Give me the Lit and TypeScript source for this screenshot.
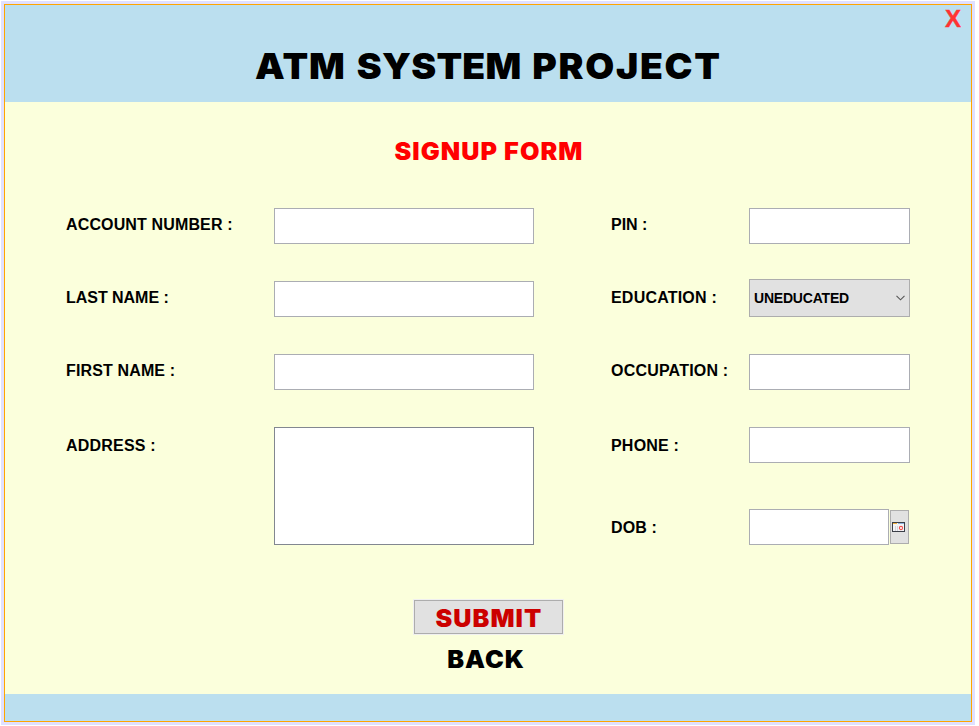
import { LitElement, html, css } from "lit";
import { customElement, state } from "lit/decorators.js";

@customElement("app-root")
export class AppRoot extends LitElement {
  static styles = css`
    :host { display: block; width: 979px; height: 726px; background: #fff; overflow: hidden; font-family: "Liberation Sans", Arial, sans-serif; font-weight: 700; color: #000; }
    * { box-sizing: border-box; }
    .pad { padding: 1px 4px 1px 1px; height: 726px; }
    .frame { height: 724px; padding: 3px; background: #e0e0ff; }
    .window { display: flex; flex-direction: column; width: 968px; height: 718px; border: 1px solid #ffa500; background: #fbffdc; position: relative; }
    .header { height: 97px; background: #bbdfef; display: flex; justify-content: center; flex: none; }
    .close { position: absolute; right: 10px; top: 0; border: 0; padding: 0; background: none; font: 700 24px/28px "Liberation Sans", Arial, sans-serif; color: #ff3333; -webkit-text-stroke: 0.4px #ff3333; }
    .heavy { font-family: "Arial Black", Inter, sans-serif; font-weight: 900; white-space: nowrap; margin: 0; }
    .wide { display: inline-block; transform: scaleX(1.05); letter-spacing: 1px; margin-right: -1px; }
    .title { font-size: 36px; line-height: 44px; margin-top: 39px; }
    .title .wide { transform: scaleX(1.04); letter-spacing: 1px; word-spacing: 2.3px; }
    .title .tight { letter-spacing: 0.2px; }
    .title .loose { letter-spacing: 1.6px; }
    .main { flex: 1; display: flex; flex-direction: column; align-items: center; }
    .sub { font-size: 24px; line-height: 30px; margin-top: 35px; color: #f00; }
    .form { display: grid; align-self: flex-start; margin: 41px 0 0 61px; grid-template-columns: 208px 260px 77px 138px 161px; grid-template-rows: 73px 73px 73px 82px 36px; align-items: start; }
    .label { font-size: 16px; line-height: 33px; letter-spacing: 0.14px; white-space: nowrap; }
    .snug { letter-spacing: -0.03px; }
    .airy { letter-spacing: 0.2px; }
    .low { line-height: 37px; }
    .c1 { grid-column: 1; } .c2 { grid-column: 2; } .c4 { grid-column: 4; } .c5 { grid-column: 5; }
    .r1 { grid-row: 1; } .r2 { grid-row: 2; } .r3 { grid-row: 3; } .r4 { grid-row: 4; } .r5 { grid-row: 5; }
    .field { display: block; width: 100%; height: 36px; border: 1px solid #abadb3; background: #fff; border-radius: 0; padding: 2px 5px; outline: none; resize: none; font: inherit; }
    .area { height: 118px; grid-row: 4 / 6; border-color: #828790; }
    .select { height: 38px; margin-top: -2px; border: 1px solid #adadad; background: #e1e1e1; display: flex; align-items: center; justify-content: space-between; padding: 0 4px; font-size: 14px; letter-spacing: -0.2px; }
    .date { display: flex; }
    .date .field { width: 140px; }
    .cal { width: 19px; height: 34px; margin: 1px 0 0 1px; border: 1px solid #adadad; background: #e1e1e1; padding: 0 0 0 1px; display: flex; align-items: center; justify-content: flex-start; }
    .submit { width: 149px; height: 34px; margin: 55px 0 0 0; border: 1px solid #adadad; background: #e1e1e1; color: #cc0000; font-size: 24px; line-height: 28px; padding: 4px 0 0; outline: 1px solid #f0f0f0; }
    .back { font-size: 24px; line-height: 30px; margin: 11px 4px 0 0; }
    .footer { height: 27px; background: #bbdfef; flex: none; }
    svg { display: block; flex: none; }
  `;

  @state() private education = "UNEDUCATED";

  private label(text: string, cls: string) {
    return html`<div class="label ${cls}">${text} :</div>`;
  }

  private field(cls: string, name: string) {
    return html`<input class="field ${cls}" aria-label=${name} />`;
  }

  render() {
    return html`<div class="pad"><div class="frame"><div class="window">
      <header class="header"><h1 class="heavy title"><span class="wide">ATM <span class="tight">SYSTEM</span> <span class="loose">PROJECT</span></span></h1></header>
      <button class="close">X</button>
      <main class="main">
        <h2 class="heavy sub"><span class="wide">SIGNUP FORM</span></h2>
        <div class="form">
          ${this.label("ACCOUNT NUMBER", "c1 r1")}${this.field("c2 r1", "Account number")}
          ${this.label("PIN", "c4 r1 snug")}${this.field("c5 r1", "Pin")}
          ${this.label("LAST NAME", "c1 r2 snug")}${this.field("c2 r2", "Last name")}
          ${this.label("EDUCATION", "c4 r2 airy")}
          <div class="select c5 r2" role="combobox"><span>${this.education}</span>
            <svg width="9" height="6" viewBox="0 0 9 6"><path d="M.5 .8 4.5 4.8 8.5 .8" fill="none" stroke="#555" stroke-width="1.1"/></svg>
          </div>
          ${this.label("FIRST NAME", "c1 r3")}${this.field("c2 r3", "First name")}
          ${this.label("OCCUPATION", "c4 r3 airy")}${this.field("c5 r3", "Occupation")}
          ${this.label("ADDRESS", "c1 r4 low airy")}<textarea class="field area c2" aria-label="Address"></textarea>
          ${this.label("PHONE", "c4 r4 low airy")}${this.field("c5 r4", "Phone")}
          ${this.label("DOB", "c4 r5 low")}
          <div class="date c5 r5">${this.field("", "Date of birth")}
            <button class="cal" aria-label="Pick date">
              <svg width="13" height="10" viewBox="0 0 13 10">
                <rect x=".5" y=".5" width="12" height="9" fill="#f4f4f7" stroke="#3c3f48"/>
                <path d="M1 1.5H5" stroke="#f0b040"/><path d="M6 1.5H12" stroke="#8fb4e0"/>
                <path d="M3.5 4V9M5.5 4V9" stroke="#d5d5dc"/>
                <circle cx="9" cy="6" r="1.6" fill="#fff" stroke="#f05050" stroke-width="1.1"/>
              </svg>
            </button>
          </div>
        </div>
        <button class="heavy submit"><span class="wide">SUBMIT</span></button>
        <div class="heavy back"><span class="wide">BACK</span></div>
      </main>
      <footer class="footer"></footer>
    </div></div></div>`;
  }
}
